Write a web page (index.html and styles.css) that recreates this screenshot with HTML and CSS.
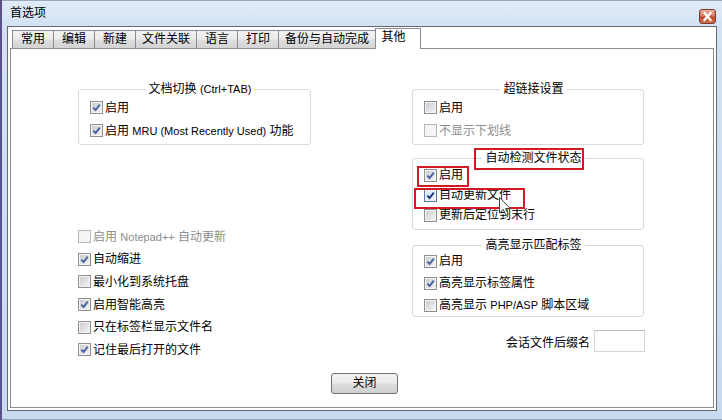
FILE: index.html
```html
<!DOCTYPE html>
<html lang="zh-CN">
<head>
<meta charset="utf-8">
<title>首选项</title>
<link rel="stylesheet" href="styles.css">
</head>
<body>
<div class="window">
  <div class="titlebar">
    <span class="title">首选项</span>
    <span class="close"><svg viewBox="0 0 17 15" width="17" height="15"><path d="M5.5 4 L11.5 11 M11.5 4 L5.5 11" stroke="#fff" stroke-width="2.2" stroke-linecap="square"/></svg></span>
  </div>
  <div class="client">
    <div class="tabs">
      <div class="tab">常用</div>
      <div class="tab">编辑</div>
      <div class="tab">新建</div>
      <div class="tab">文件关联</div>
      <div class="tab">语言</div>
      <div class="tab">打印</div>
      <div class="tab">备份与自动完成</div>
      <div class="tab active">其他</div>
    </div>
    <div class="panel">
      <div class="cols">
        <div class="col">
          <fieldset class="group g1">
            <legend>文档切换 <span class="lat">(Ctrl+TAB)</span></legend>
            <div class="row"><span class="cb on"><svg viewBox="0 0 11 11"><path d="M2.3 5.6 L4.6 8 L8.8 2.6"/></svg></span><span class="txt">启用</span></div>
            <div class="row"><span class="cb on"><svg viewBox="0 0 11 11"><path d="M2.3 5.6 L4.6 8 L8.8 2.6"/></svg></span><span class="txt">启用 <span class="lat">MRU (Most Recently Used)</span> 功能</span></div>
          </fieldset>
          <div class="list">
            <div class="row dis"><span class="cb"></span><span class="txt">启用 <span class="lat">Notepad++</span> 自动更新</span></div>
            <div class="row"><span class="cb on"><svg viewBox="0 0 11 11"><path d="M2.3 5.6 L4.6 8 L8.8 2.6"/></svg></span><span class="txt">自动缩进</span></div>
            <div class="row"><span class="cb"></span><span class="txt">最小化到系统托盘</span></div>
            <div class="row"><span class="cb on"><svg viewBox="0 0 11 11"><path d="M2.3 5.6 L4.6 8 L8.8 2.6"/></svg></span><span class="txt">启用智能高亮</span></div>
            <div class="row"><span class="cb"></span><span class="txt">只在标签栏显示文件名</span></div>
            <div class="row"><span class="cb on"><svg viewBox="0 0 11 11"><path d="M2.3 5.6 L4.6 8 L8.8 2.6"/></svg></span><span class="txt">记住最后打开的文件</span></div>
          </div>
        </div>
        <div class="col">
          <fieldset class="group g1">
            <legend>超链接设置</legend>
            <div class="row"><span class="cb"></span><span class="txt">启用</span></div>
            <div class="row dis"><span class="cb"></span><span class="txt">不显示下划线</span></div>
          </fieldset>
          <fieldset class="group g2">
            <legend>自动检测文件状态</legend>
            <div class="row"><span class="cb on"><svg viewBox="0 0 11 11"><path d="M2.3 5.6 L4.6 8 L8.8 2.6"/></svg></span><span class="txt">启用</span></div>
            <div class="row"><span class="cb on hot"><svg viewBox="0 0 11 11"><path d="M2.3 5.6 L4.6 8 L8.8 2.6"/></svg></span><span class="txt">自动更新文件</span></div>
            <div class="row"><span class="cb"></span><span class="txt">更新后定位到末行</span></div>
          </fieldset>
          <fieldset class="group g3">
            <legend>高亮显示匹配标签</legend>
            <div class="row"><span class="cb on"><svg viewBox="0 0 11 11"><path d="M2.3 5.6 L4.6 8 L8.8 2.6"/></svg></span><span class="txt">启用</span></div>
            <div class="row"><span class="cb on"><svg viewBox="0 0 11 11"><path d="M2.3 5.6 L4.6 8 L8.8 2.6"/></svg></span><span class="txt">高亮显示标签属性</span></div>
            <div class="row"><span class="cb"></span><span class="txt">高亮显示 <span class="lat">PHP/ASP</span> 脚本区域</span></div>
          </fieldset>
          <div class="session">
            <span>会话文件后缀名</span>
            <span class="input"></span>
          </div>
        </div>
      </div>
      <div class="actions">
        <button class="btn">关闭</button>
      </div>
    </div>
  </div>
  <div class="mark m1"></div>
  <div class="mark m2"></div>
  <div class="mark m3"></div>
  <svg class="cursor" viewBox="0 0 12 19" width="12" height="19"><path d="M0.5 0.5 L0.5 16 L4.3 12.4 L6.9 18.3 L9.1 17.3 L6.6 11.6 L11.3 11.6 Z" fill="#fff" stroke="#444" stroke-width="1"/></svg>
</div>
</body>
</html>
```

FILE: styles.css
```css
html, body {
  margin: 0;
  padding: 0;
}
body {
  width: 722px;
  height: 420px;
  overflow: hidden;
  font-family: "Liberation Sans", "Noto Sans CJK SC", sans-serif;
  font-size: 12px;
  color: #000;
  background: #c8dbf1;
}
.window {
  position: relative;
  width: 722px;
  height: 420px;
  box-sizing: border-box;
  display: flex;
  flex-direction: column;
  background: linear-gradient(to bottom, #e2ecf8 0, #d2e2f4 26px, #c7daf0 100%);
  box-shadow: inset 2px 0 0 #5d4f8a, inset 0 1px 0 #9aaabd, inset 0 -1px 0 #8ea4bf;
}
.titlebar {
  height: 26px;
  flex: none;
  display: flex;
  align-items: flex-start;
  justify-content: space-between;
  padding: 0 6px 0 10px;
}
.title {
  margin-top: 6px;
  line-height: 14px;
}
.close {
  margin-top: 9px;
  width: 17px;
  height: 15px;
  box-sizing: border-box;
  border: 1px solid #7a3a2a;
  border-radius: 3px;
  background: linear-gradient(to bottom, #e9b1a1 0%, #d77a62 45%, #c24a2c 55%, #d0704e 100%);
  display: flex;
}
.close svg {
  margin: -1px;
}
.client {
  flex: 1;
  margin: 0 5px 9px 7px;
  border: 1px solid #6a6a6a;
  background: #fff;
  padding: 0 2px 2px 2px;
  display: flex;
  flex-direction: column;
}
.tabs {
  height: 22px;
  flex: none;
  display: flex;
  align-items: flex-end;
  padding-left: 3px;
  margin-bottom: -1px;
  position: relative;
  z-index: 1;
}
.tab {
  height: 18px;
  box-sizing: border-box;
  min-width: 42px;
  margin-left: -1px;
  margin-bottom: 1px;
  padding: 0 6px;
  border: 1px solid #898c95;
  border-bottom: none;
  background: linear-gradient(to bottom, #f3f3f3 0%, #ebebeb 45%, #dedede 55%, #d3d3d3 100%);
  text-align: center;
  line-height: 17px;
  white-space: nowrap;
}
.tab.active {
  height: 21px;
  margin-bottom: 0;
  min-width: 46px;
  padding: 0 14px 0 5px;
  background: #fff;
  line-height: 17px;
}
.panel {
  flex: 1;
  border: 1px solid #898c95;
  background: #fff;
  display: flex;
  flex-direction: column;
}
.cols {
  display: grid;
  grid-template-columns: 233px 232px;
  column-gap: 101px;
  padding: 33px 0 0 67px;
  align-items: start;
}
.col {
  display: flex;
  flex-direction: column;
}
.group {
  margin: 0;
  padding: 0 0 2px 11px;
  border: 1px solid #d5dae0;
  border-radius: 3px;
  min-width: 0;
}
.group legend {
  margin: 0 auto;
  padding: 0 3px;
  line-height: 14px;
  height: 14px;
}
.row {
  display: flex;
  align-items: center;
  gap: 2px;
  height: 23px;
  line-height: 14px;
}
.txt {
  white-space: nowrap;
}
.g2 {
  margin-top: 6px;
  padding-bottom: 4px;
}
.g2 .row {
  height: 20px;
}
.g3 {
  margin-top: 8px;
  padding-bottom: 0;
}
.g3 .row {
  height: 22px;
}
.g3 .row:first-of-type {
  margin-top: -2px;
}
.list {
  margin-top: 80.5px;
}
.list .row {
  height: 22.6px;
}
.lat {
  font-size: 11px;
}
.row.dis {
  color: #8d8d8d;
}
.cb {
  flex: none;
  width: 13px;
  height: 13px;
  box-sizing: border-box;
  border: 1px solid #8e8f8f;
  background: linear-gradient(135deg, #c3c7cc 0%, #e2e3e5 55%, #f6f6f6 100%);
  box-shadow: inset 0 0 0 1px #f4f4f4;
  display: flex;
}
.cb svg {
  width: 11px;
  height: 11px;
}
.cb svg path {
  fill: none;
  stroke: #4c64a4;
  stroke-width: 2;
}
.cb.hot {
  border-color: #5a7ab0;
  background: linear-gradient(135deg, #d8e6f5 0%, #eef4fb 100%);
}
.cb.hot svg path {
  stroke: #1c3a7a;
}
.dis .cb {
  border-color: #b8b8b8;
  background: #f4f4f4;
}
.session {
  margin-top: 13px;
  display: flex;
  align-items: center;
  justify-content: flex-end;
  gap: 4px;
  margin-right: -1px;
}
.input {
  width: 51px;
  height: 22px;
  box-sizing: border-box;
  border: 1px solid #d4d6da;
  border-top-color: #b9bcc2;
  background: #fff;
}
.actions {
  padding-left: 320px;
  margin-top: 12px;
}
.btn {
  width: 67px;
  height: 21px;
  padding: 0;
  box-sizing: border-box;
  border: 1px solid #707070;
  border-radius: 3px;
  background: linear-gradient(to bottom, #f2f2f2 0%, #ebebeb 48%, #dddddd 52%, #cfcfcf 100%);
  font-family: "Liberation Sans", "Noto Sans CJK SC", sans-serif;
  font-size: 12px;
  color: #000;
  line-height: 17px;
}
.mark {
  position: absolute;
  box-sizing: border-box;
  border: 2px solid #d11a24;
}
.m1 {
  left: 474px;
  top: 148px;
  width: 110px;
  height: 22px;
}
.m2 {
  left: 417px;
  top: 166px;
  width: 52px;
  height: 21px;
}
.m3 {
  left: 414px;
  top: 188px;
  width: 111px;
  height: 21px;
}
.cursor {
  position: absolute;
  left: 499px;
  top: 197px;
}
```
